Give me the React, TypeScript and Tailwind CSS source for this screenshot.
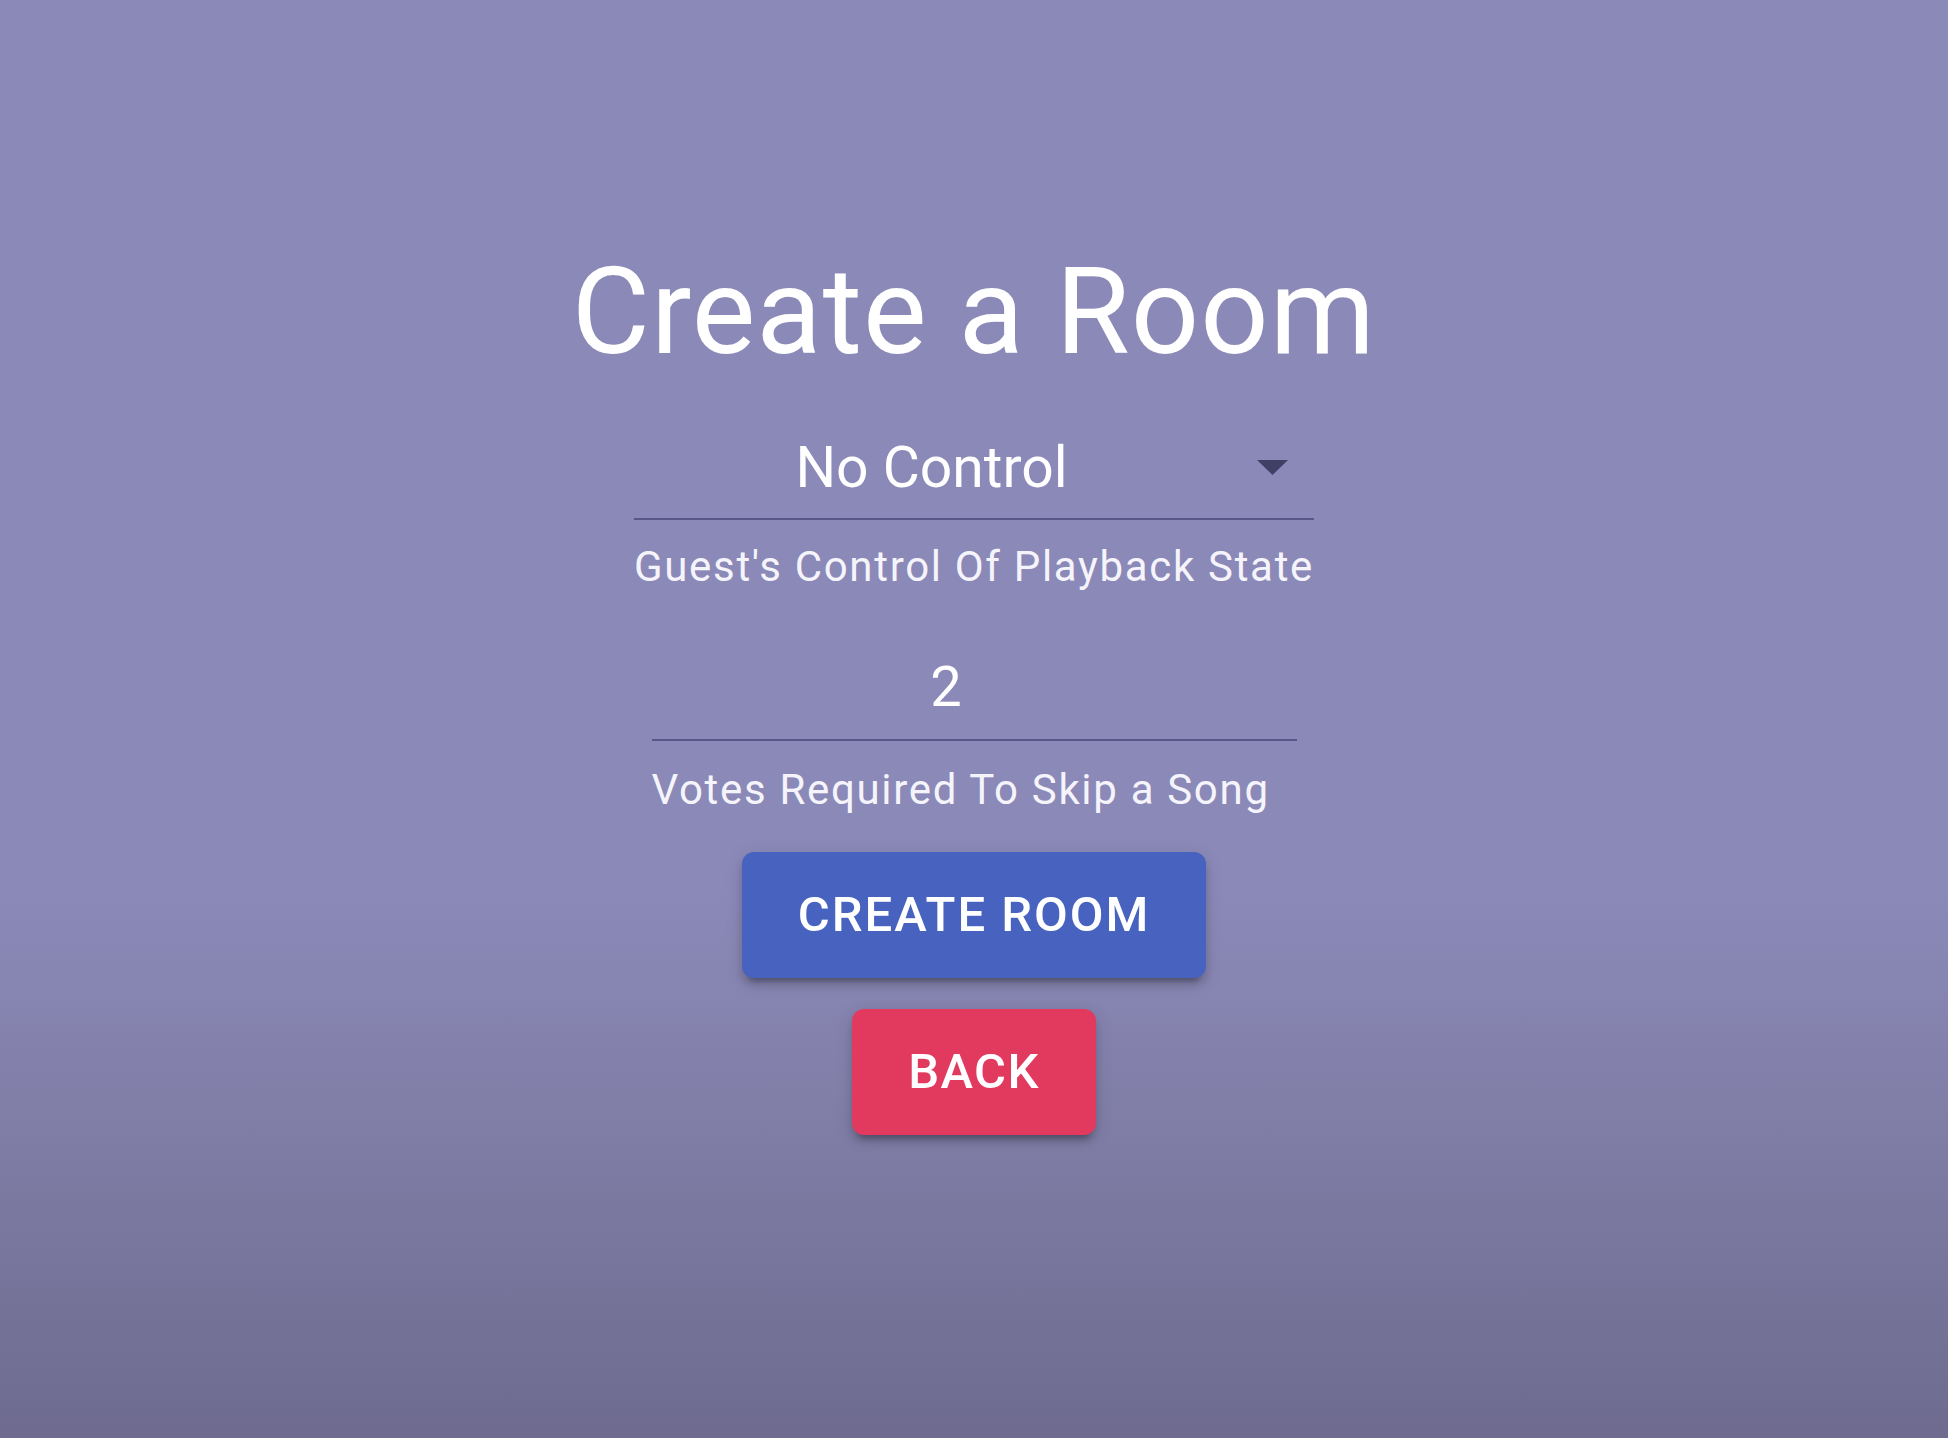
import React from "react";

function App() {
  return (
    <div className="min-h-screen w-full bg-[linear-gradient(to_bottom,#8b89b8_0%,#8b89b8_62%,#8381ab_74%,#6e6b8f_100%)] font-['Roboto',_'Liberation_Sans',_sans-serif] text-white">
      <div className="flex flex-col items-center pt-[252px]">
        {/* Title */}
        <h1 className="text-[120px] leading-none font-normal tracking-[0.009em]">
          Create a Room
        </h1>

        {/* Guest control select */}
        <div className="mt-[62px] w-[680px]">
          <div className="relative border-b-2 border-[#5a5788] pb-[16px]">
            <div className="pr-[85px] text-center text-[57px] leading-[68px]">
              No Control
            </div>
            <svg
              className="absolute right-[26px] top-[26px]"
              width="31"
              height="15"
              viewBox="0 0 31 15"
            >
              <polygon points="0,0 31,0 15.5,15" fill="#423f66" />
            </svg>
          </div>
          <p className="mt-[17px] whitespace-nowrap text-[42px] leading-[60px] tracking-[0.04em] text-[#f5f4fb]">
            Guest's Control Of Playback State
          </p>
        </div>

        {/* Votes input */}
        <div className="mt-[56px] w-[645px]">
          <div className="border-b-2 border-[#5a5788] pb-[18px]">
            <input
              type="text"
              readOnly
              value="2"
              className="block w-full bg-transparent pr-[56px] text-center text-[56px] leading-[68px] text-white outline-none"
            />
          </div>
          <p className="mt-[19px] whitespace-nowrap text-[42px] leading-[60px] tracking-[0.04em] text-[#f5f4fb]">
            Votes Required To Skip a Song
          </p>
        </div>

        {/* Buttons */}
        <button className="mt-[32px] rounded-[12px] bg-[#4862c0] px-[56px] py-[21px] text-[49px] leading-[84px] font-medium uppercase tracking-[0.04em] text-white shadow-[0_10px_4px_-7px_rgba(0,0,0,0.2),0_7px_7px_0_rgba(0,0,0,0.14),0_4px_18px_0_rgba(0,0,0,0.12)]">
          Create Room
        </button>
        <button className="mt-[31px] rounded-[12px] bg-[#e23a5f] px-[56px] py-[21px] text-[49px] leading-[84px] font-medium uppercase tracking-[0.0286em] text-white shadow-[0_10px_4px_-7px_rgba(0,0,0,0.2),0_7px_7px_0_rgba(0,0,0,0.14),0_4px_18px_0_rgba(0,0,0,0.12)]">
          Back
        </button>
      </div>
    </div>
  );
}

export default App;
